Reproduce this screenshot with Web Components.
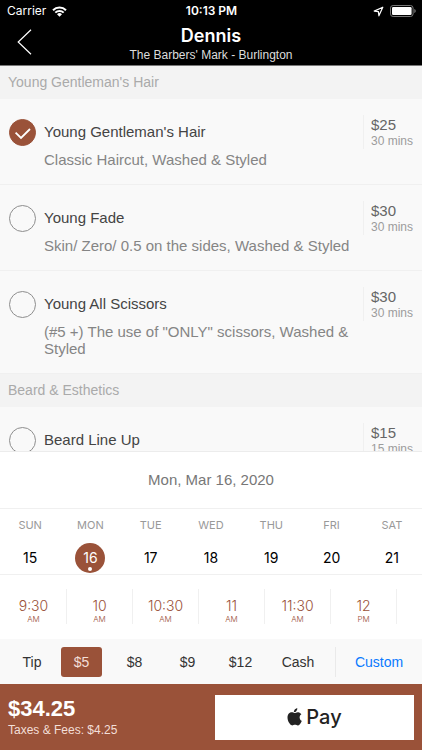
<!DOCTYPE html>
<html lang="en">
<head>
<meta charset="utf-8">
<meta name="viewport" content="width=device-width, initial-scale=1">
<title>Book with Dennis</title>
<style>
  :root {
    --accent: #9a5239;
    --row: #f9f9f9;
    --band: #f3f3f3;
    --rule: #f0f0f0;
    --ui: Inter, "Liberation Sans", sans-serif;
  }
  body {
    margin: 0;
    height: 100vh;
    background: #fff;
    color: #444;
    font-family: "Liberation Sans", Arial, sans-serif;
    font-size: 15px;
  }
</style>
</head>
<body>

<booking-screen>
  <status-bar slot="top" carrier="Carrier" time="10:13 PM"></status-bar>
  <nav-header slot="top">
    Dennis
    <span slot="place">The Barbers' Mark - Burlington</span>
  </nav-header>

  <service-group heading="Young Gentleman's Hair">
    <service-item name="Young Gentleman's Hair" price="$25" mins="30 mins" checked>Classic Haircut, Washed &amp; Styled</service-item>
    <service-item name="Young Fade" price="$30" mins="30 mins">Skin/ Zero/ 0.5 on the sides, Washed &amp; Styled</service-item>
    <service-item name="Young All Scissors" price="$30" mins="30 mins">(#5 +) The use of "ONLY" scissors, Washed &amp; Styled</service-item>
  </service-group>
  <service-group heading="Beard &amp; Esthetics">
    <service-item name="Beard Line Up" price="$15" mins="15 mins"></service-item>
  </service-group>

  <week-picker slot="bottom" first="15" selected="16">Mon, Mar 16, 2020</week-picker>
  <time-strip slot="bottom" times="9:30 AM,10 AM,10:30 AM,11 AM,11:30 AM,12 PM"></time-strip>
  <tip-bar slot="bottom" selected="$5"></tip-bar>
  <pay-bar slot="bottom" total="$34.25">Taxes &amp; Fees: $4.25</pay-bar>
</booking-screen>

<script>
(() => {
  const define = (name, render, setup) => customElements.define(name, class extends HTMLElement {
    connectedCallback() {
      if (this.shadowRoot) return;
      const root = this.attachShadow({ mode: 'open' });
      const attr = (k) => this.getAttribute(k) || '';
      root.innerHTML = render(attr, this);
      if (setup) setup(root, this);
    }
  });

  // single choice among sibling buttons
  const pickOne = (root) => root.addEventListener('click', (e) => {
    const hit = e.target.closest('button');
    if (!hit) return;
    root.querySelectorAll('button').forEach((b) => b.setAttribute('aria-pressed', b === hit));
  });

  // shell: fixed top and bottom, scrolling list between
  define('booking-screen', () => `
    <style>
      :host { display: flex; flex-direction: column; height: 100%; }
      header, footer { flex: none; }
      main { flex: 1; min-height: 0; overflow-y: auto; scrollbar-width: none; background: var(--row); }
      footer { border-top: 1px solid #ececec; }
    </style>
    <header><slot name="top"></slot></header>
    <main><slot></slot></main>
    <footer><slot name="bottom"></slot></footer>`);

  define('status-bar', (attr) => `
    <style>
      :host { display: grid; grid-template-columns: 1fr auto 1fr; align-items: center; height: 22px;
              padding: 0 6px 0 7px; background: #000; color: #fff; font: 12px/22px var(--ui); }
      div { display: flex; align-items: center; gap: 6px; }
      .end { justify-content: flex-end; }
      b { font-weight: 600; }
      svg { display: block; }
    </style>
    <div>
      <span>${attr('carrier')}</span>
      <svg width="15" height="11" viewBox="0 0 15 11" fill="none" stroke="#fff" stroke-width="2">
        <path d="M1 4.2a9.2 9.2 0 0 1 13 0M3.3 6.6a6 6 0 0 1 8.4 0"/>
        <path d="M7.5 10.8 5 8.3a3.6 3.6 0 0 1 5 0z" fill="#fff" stroke="none"/>
      </svg>
    </div>
    <b>${attr('time')}</b>
    <div class="end">
      <svg width="11" height="11" viewBox="0 0 11 11" fill="none" stroke="#fff" stroke-width="1.2" stroke-linejoin="round">
        <path d="M9.8 1.2 1.2 5.1l4.2.5.5 4.2z"/>
      </svg>
      <svg width="26" height="12" viewBox="0 0 26 12">
        <rect x=".5" y=".5" width="22.6" height="11" rx="2.6" fill="none" stroke="#777"/>
        <rect x="2" y="2" width="19.6" height="8" rx="1.2" fill="#fff"/>
        <path d="M24.3 4v4c.9-.3 1.4-1 1.4-2s-.5-1.7-1.4-2z" fill="#777"/>
      </svg>
    </div>`);

  define('nav-header', () => `
    <style>
      :host { display: grid; grid-template-columns: 48px 1fr 48px; background: #000; color: #fff;
              border-bottom: 1px solid #777; height: 43px; }
      button { border: 0; padding: 0 0 4px 17px; background: none; color: inherit; text-align: left; }
      svg { display: block; }
      hgroup { margin: 0; text-align: center; }
      h1 { margin: 3px 0 0; font: 600 18px/22px var(--ui); }
      p { margin: 0; font-size: 12px; line-height: 16px; color: #ddd; }
    </style>
    <button type="button" aria-label="Back">
      <svg width="16" height="26" viewBox="0 0 16 26" fill="none" stroke="#fff" stroke-width="1.2">
        <path d="M14 .8 1.2 13 14 25.2"/>
      </svg>
    </button>
    <hgroup>
      <h1><slot></slot></h1>
      <p><slot name="place"></slot></p>
    </hgroup>`);

  define('service-group', (attr) => `
    <style>
      :host { display: block; }
      h2 { margin: 0; padding: 0 8px; background: var(--band); color: #aaa; font-size: 14px; font-weight: 400; line-height: 33px; }
    </style>
    <h2>${attr('heading')}</h2>
    <slot></slot>`);

  define('service-item', (attr, el) => `
    <style>
      :host { display: block; background: var(--row); border-bottom: 1px solid var(--rule); }
      label { display: grid; grid-template-columns: 27px 1fr 50px; column-gap: 8px; align-items: start; padding: 16px 9px; }
      input { appearance: none; margin: 4px 0 0; width: 27px; height: 27px; border: 1px solid #8e8e8e; border-radius: 50%; }
      input:checked { border-color: var(--accent); background: var(--accent); }
      .box { display: grid; }
      .box > * { grid-area: 1 / 1; }
      svg { margin-top: 4px; visibility: hidden; pointer-events: none; }
      input:checked + svg { visibility: visible; }
      .text { padding: 8px 0 0; }
      strong { display: block; font-weight: 400; line-height: 18px; margin-bottom: 10px; color: #444; }
      p { margin: 0; line-height: 17px; min-height: 17px; color: #858585; }
      .cost { border-left: 1px solid var(--rule); padding: 1px 0 0 7px; white-space: nowrap; color: #666; line-height: 18px; }
      small { display: block; font-size: 12px; line-height: 15px; color: #9c9c9c; }
    </style>
    <label>
      <span class="box">
        <input type="checkbox" ${el.hasAttribute('checked') ? 'checked' : ''}>
        <svg width="27" height="27" viewBox="0 0 27 27" fill="none" stroke="#fff" stroke-width="1.8"><path d="M6.600 13.600 12 19 21 10"/></svg>
      </span>
      <div class="text">
        <strong>${attr('name')}</strong>
        <p><slot></slot></p>
      </div>
      <div class="cost">${attr('price')}<small>${attr('mins')}</small></div>
    </label>`);

  const DAYS = ['SUN', 'MON', 'TUE', 'WED', 'THU', 'FRI', 'SAT'];

  define('week-picker', (attr) => `
    <style>
      :host { display: block; background: #fff; border-bottom: 1px solid var(--rule); }
      h2 { margin: 0; border-bottom: 1px solid var(--rule); color: #777; font-size: 15px; font-weight: 400; line-height: 56px; text-align: center; }
      .week { display: grid; grid-template-columns: repeat(7, 1fr); justify-items: center; padding: 8px 0 1px; font-family: var(--ui); }
      .week > div { display: grid; justify-items: center; gap: 10px; }
      span { color: #999; font-size: 11px; line-height: 16px; }
      button { position: relative; width: 30px; height: 30px; border: 0; border-radius: 50%; padding: 0; background: none; color: #000; font: 14px/30px var(--ui); }
      button[aria-pressed="true"] { background: var(--accent); color: #fff; }
      button[aria-pressed="true"]::after { content: ""; position: absolute; left: 13px; bottom: 2px; width: 4px; height: 4px; border-radius: 50%; background: #fff; }
    </style>
    <h2><slot></slot></h2>
    <div class="week">
      ${DAYS.map((d, i) => {
        const date = Number(attr('first')) + i;
        return `<div><span>${d}</span><button type="button" aria-pressed="${String(date) === attr('selected')}">${date}</button></div>`;
      }).join('')}
    </div>`, pickOne);

  define('time-strip', (attr) => `
    <style>
      :host { display: grid; grid-auto-flow: column; grid-auto-columns: 66px; overflow-x: auto; scrollbar-width: none; background: #fff; padding: 14px 0 15px 1px; }
      button { border: 0; border-right: 1px solid var(--rule); padding: 8px 0 0; height: 35px; background: none; color: var(--accent); font: 300 14px/18px var(--ui); }
      small { display: block; font-size: 8px; line-height: 9px; }
    </style>
    ${attr('times').split(',').map((t) => {
      const [hour, half] = t.split(' ');
      return `<button type="button">${hour}<small>${half}</small></button>`;
    }).join('')}`);

  define('tip-bar', (attr) => `
    <style>
      :host { display: grid; grid-template-columns: 46fr repeat(4, 53fr) 62fr 93fr; align-items: center; background: var(--row); padding: 8px 0 7px 9px; color: #333; }
      span { text-align: center; font-size: 14px; }
      button { margin: 0 6px; height: 30px; border: 0; border-radius: 3px; padding: 0; background: none; color: inherit; font: 14px/30px "Liberation Sans", sans-serif; }
      button[aria-pressed="true"] { background: var(--accent); color: #f3dfd8; }
      .custom { margin-right: 0; border-left: 1px solid #eaeaea; border-radius: 0; color: #0a7aff; }
    </style>
    <span>Tip</span>
    ${['$5', '$8', '$9', '$12', 'Cash'].map((t) => `<button type="button" aria-pressed="${t === attr('selected')}">${t}</button>`).join('')}
    <button type="button" class="custom">Custom</button>`, pickOne);

  define('pay-bar', (attr) => `
    <style>
      :host { display: grid; grid-template-columns: 1fr 1fr; gap: 8px; align-items: center; padding: 11px 8px 10px; background: var(--accent); color: #fff; }
      strong { display: block; font-size: 22px; line-height: 24px; }
      p { margin: 0; font-size: 12px; line-height: 18px; color: #f3dfd8; }
      button { display: flex; align-items: center; justify-content: center; gap: 4px; height: 45px; border: 0; padding: 0 0 1px; background: #fff; color: #222; font: 500 20px/24px var(--ui); }
    </style>
    <div>
      <strong>${attr('total')}</strong>
      <p><slot></slot></p>
    </div>
    <button type="button">
      <svg width="15" height="18" viewBox="0 0 15 18" fill="currentColor" aria-hidden="true">
        <path d="M10.3.2c.1 1-.3 2-.9 2.7-.6.8-1.6 1.3-2.5 1.200-.1-1 .4-2 .9-2.600C8.400.8 9.500.2 10.300.2z"/>
        <path d="M14.4 6.200c-.1.100-1.800 1.100-1.800 3.200 0 2.500 2.200 3.400 2.200 3.400s-.3 1.200-1.200 2.400c-.7 1.100-1.500 2.200-2.700 2.200s-1.500-.7-2.900-.7c-1.300 0-1.800.7-2.900.7s-1.900-1-2.800-2.300C1.300 13.600.5 11.400.5 9.400c0-3.300 2.200-5.100 4.300-5.100 1.100 0 2.100.7 2.800.7s1.800-.8 3.100-.8c.5 0 2.400.1 3.700 2z"/>
      </svg>
      <span>Pay</span>
    </button>`);
})();
</script>
</body>
</html>
